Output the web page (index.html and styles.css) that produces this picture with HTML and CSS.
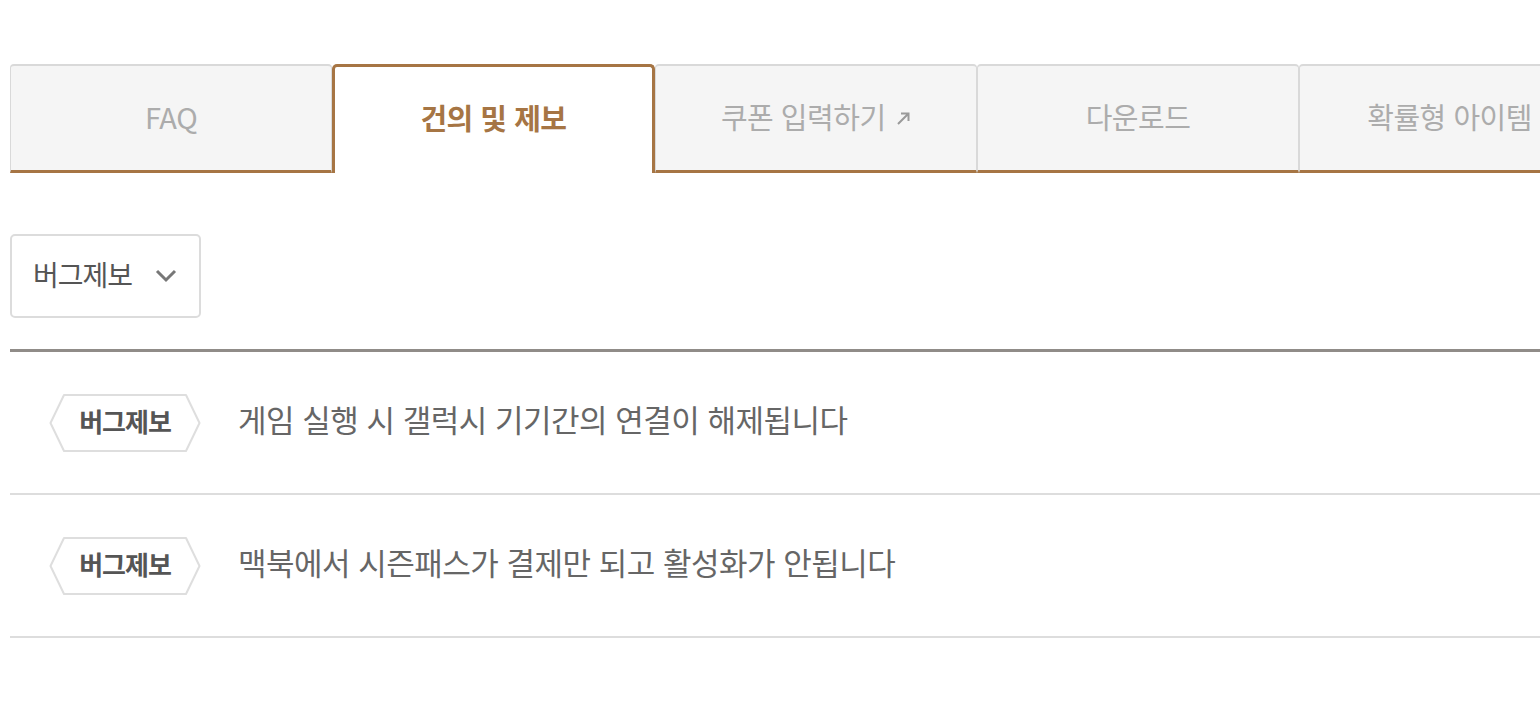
FILE: index.html
```html
<!DOCTYPE html>
<html lang="ko">
<head>
    <meta charset="UTF-8">
    <meta name="viewport" content="width=device-width, initial-scale=1.0">
    <title>건의 및 제보</title>
    <link rel="stylesheet" href="styles.css">
</head>
<body>

<div class="wrap">
    <ul class="tabs">
        <li class="tab">FAQ</li>
        <li class="tab active">건의 및 제보</li>
        <li class="tab">쿠폰 입력하기
            <svg class="ext" width="15" height="15" viewBox="0 0 15 15">
                <path d="M2 13 L12.5 2.5 M5 2.5 H12.5 V10" fill="none" stroke="#9a9a9a" stroke-width="2"/>
            </svg>
        </li>
        <li class="tab">다운로드</li>
        <li class="tab last">확률형 아이템</li>
    </ul>

    <div class="select">
        <span>버그제보</span>
        <svg width="22" height="14" viewBox="0 0 22 14">
            <path d="M2 2 L11 11 L20 2" fill="none" stroke="#777" stroke-width="3"/>
        </svg>
    </div>

    <ul class="list">
        <li class="row">
            <span class="badge">
                <svg class="hex" width="152" height="58" viewBox="0 0 152 58">
                    <path d="M1.5 29 L15 1 H137 L150.5 29 L137 57 H15 Z" fill="#fff" stroke="#dedede" stroke-width="2" stroke-linejoin="round"/>
                </svg>
                <b>버그제보</b>
            </span>
            <span class="title">게임 실행 시 갤럭시 기기간의 연결이 해제됩니다</span>
        </li>
        <li class="row">
            <span class="badge">
                <svg class="hex" width="152" height="58" viewBox="0 0 152 58">
                    <path d="M1.5 29 L15 1 H137 L150.5 29 L137 57 H15 Z" fill="#fff" stroke="#dedede" stroke-width="2" stroke-linejoin="round"/>
                </svg>
                <b>버그제보</b>
            </span>
            <span class="title">맥북에서 시즌패스가 결제만 되고 활성화가 안됩니다</span>
        </li>
    </ul>
</div>

</body>
</html>
```

FILE: styles.css
```css
body {
    margin: 0;
    padding: 0;
    background: #fff;
    font-family: "Noto Sans CJK KR", "Noto Sans", sans-serif;
    overflow: hidden;
}
ul {
    list-style: none;
    margin: 0;
    padding: 0;
}
.wrap {
    width: 1590px;
    padding: 64px 0 0 10px;
}
.tabs {
    display: flex;
}
.tab {
    box-sizing: border-box;
    flex: none;
    width: 322.3px;
    height: 109px;
    padding-bottom: 4px;
    display: flex;
    align-items: center;
    justify-content: center;
    gap: 10px;
    background: #f5f5f5;
    border: 1px solid #d9d9d9;
    border-top-width: 2px;
    border-bottom: 3px solid #a67544;
    border-radius: 4px 4px 0 0;
    font-size: 29px;
    color: #acacac;
    letter-spacing: -0.5px;
}
.tab.last {
    flex: 1;
}
.tab.active {
    background: #fff;
    border: 3px solid #a67544;
    border-bottom: 0;
    padding-bottom: 6px;
    border-radius: 5px 5px 0 0;
    color: #a67544;
    font-weight: bold;
}
.ext {
    margin-top: 4px;
}
.select {
    box-sizing: border-box;
    width: 191px;
    height: 84px;
    margin-top: 61px;
    padding: 0 22px 0 21px;
    display: flex;
    align-items: center;
    justify-content: space-between;
    border: 2px solid #dcdcdc;
    border-radius: 5px;
    font-size: 28px;
    color: #555;
    letter-spacing: -1px;
}
.select span {
    margin-bottom: 4px;
}
.list {
    margin-top: 31px;
    border-top: 3px solid #908c88;
}
.row {
    height: 141px;
    display: flex;
    align-items: center;
    gap: 37px;
    padding-left: 39px;
    border-bottom: 2px solid #dddddd;
}
.badge {
    position: relative;
    width: 152px;
    height: 58px;
    display: flex;
    align-items: center;
    justify-content: center;
}
.hex {
    position: absolute;
    left: 0;
    top: 0;
}
.badge b {
    position: relative;
    margin-bottom: 5px;
    font-size: 26px;
    color: #555;
    letter-spacing: -1px;
}
.title {
    margin-bottom: 8px;
    font-size: 31px;
    color: #666;
    letter-spacing: -0.5px;
}
```
